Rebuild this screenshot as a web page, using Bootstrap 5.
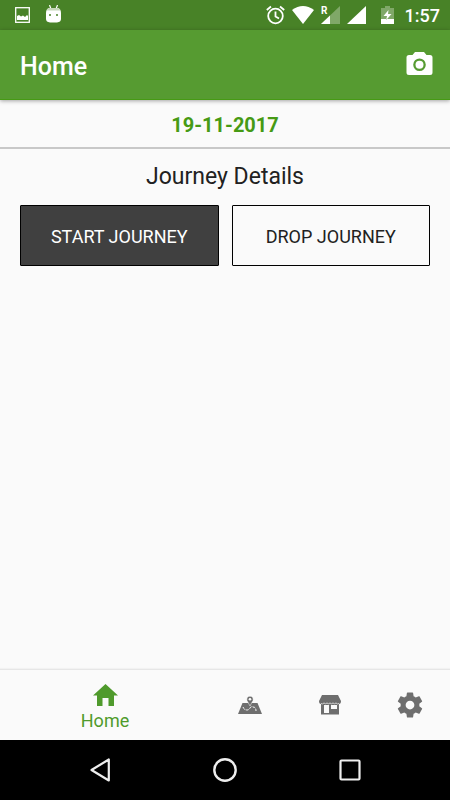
<!DOCTYPE html>
<html lang="en">
<head>
<meta charset="utf-8">
<meta name="viewport" content="width=device-width, initial-scale=1">
<title>Home</title>
<link href="https://cdn.jsdelivr.net/npm/bootstrap@5.3.0/dist/css/bootstrap.min.css" rel="stylesheet">
<style>
  body { font-family: Roboto, "Liberation Sans", sans-serif; background: #fafafa; color: #212121; }
  svg { display: block; flex: none; }
  .status-bar { height: 30px; background: #488227; color: #fff; padding: 0 10px 0 15px; }
  .status-right { gap: 7px; }
  .clock { font-size: 18px; line-height: 30px; font-weight: 500; padding-top: 1px; }
  .app-bar { height: 70px; background: #569b31; border-bottom: 1px solid #469a14; box-shadow: 0 1px 4px rgba(0,0,0,.35); padding: 0 17px 0 20px; }
  .app-title { font-size: 25px; line-height: 32px; font-weight: 500; color: #fff; padding-top: 4px; }
  .date-row { font-size: 20px; line-height: 26px; padding: 12px 0 9px; font-weight: 700; color: #469a14; border-bottom: 2px solid #c8c8c8; }
  .section-title { font-size: 23px; line-height: 28px; font-weight: 400; padding: 14px 0; }
  .actions { gap: 13px; padding: 0 20px; }
  .btn-journey { flex: 1 1 0; height: 61px; border: 1px solid #000; border-radius: 1px; font-size: 18px; line-height: 24px; color: #212121; padding: 2px 0 0; }
  .btn-journey.filled { background: #404040; color: #fff; }
  .tabs { height: 71px; border-top: 1px solid #e6e6e6; box-shadow: 0 -1px 1px rgba(0,0,0,.03); }
  .tab-item { flex: 8 1 0; color: #6e6e6e; text-decoration: none; }
  .tab-item.current { flex-grow: 21; color: #4f9a2c; padding-top: 6px; }
  .tab-label { font-size: 18px; line-height: 22px; }
  .system-nav { height: 60px; background: #000; padding: 0 38px; }
  .system-nav button { flex: 1 1 0; background: none; border: 0; padding: 0; }
</style>
</head>
<body class="d-flex flex-column min-vh-100">
<div class="status-bar d-flex align-items-center justify-content-between">
  <div class="d-flex align-items-center">
    <svg width="15" height="16" viewBox="0 0 15 16"><rect x=".7" y=".7" width="13.6" height="14.6" fill="none" stroke="#fff" stroke-width="1.3"/><path d="M2 13V9l2-1 2 1.500 2-1 2 1.500 2-2 1 1v4z" fill="#fff"/></svg>
    <svg class="ms-3" width="15" height="20" viewBox="0 0 15 20"><path d="M3.500 0L5 4M11.500 0L10 4" stroke="#fff" stroke-width="1.200"/><path d="M0 8q0-4 3-5h9q3 1 3 5v6q0 3-4 3.500H4Q0 17 0 14z" fill="#fff"/><path d="M3 3h9q2 .5 2.500 2.500h-14Q1 3.500 3 3z" fill="#c5d8b9"/><circle cx="4" cy="10" r="1" fill="#488227"/><circle cx="11" cy="10" r="1" fill="#488227"/></svg>
  </div>
  <div class="status-right d-flex align-items-center">
    <svg width="19" height="20" viewBox="0 0 19 20"><g fill="none" stroke="#fff" stroke-width="1.800"><circle cx="9.500" cy="11" r="7.300"/><path d="M.8 5L5 1.500M18.200 5L14 1.500M9.500 6.500v5l3.500 2"/></g></svg>
    <svg width="22" height="18" viewBox="0 0 22 18"><path d="M0 4Q11-4 22 4L11 18z" fill="#fff"/></svg>
    <svg width="19" height="20" viewBox="0 0 19 20"><path d="M19 1v18H0z" fill="#80a868"/><path d="M9 10.500V19H0z" fill="#fff"/><path d="M0 0h7v10H0z" fill="#488227"/><text x="0" y="9" font-size="10" font-weight="700" fill="#fff">R</text></svg>
    <svg width="19" height="20" viewBox="0 0 19 20"><path d="M19 1v18H0z" fill="#fff"/></svg>
    <svg class="ms-2" width="13" height="18" viewBox="0 0 13 18"><path d="M4 0h5v2h4v16H0V2h4z" fill="#80a868"/><path d="M0 13h13v5H0zM7.500 4L2.500 10H6l-.8 4L10.500 8H7z" fill="#fff"/></svg>
    <span class="clock ms-1">1:57</span>
  </div>
</div>
<header class="app-bar d-flex align-items-center justify-content-between">
  <h1 class="app-title mb-0">Home</h1>
  <button type="button" class="btn p-0 border-0" aria-label="Take photo">
    <svg width="27" height="26" viewBox="0 0 27 26"><path fill="#fff" fill-rule="evenodd" d="M9 0h9l2.500 3H24q2.500 0 2.500 2.500v15Q26.500 23 24 23H3Q.5 23 .5 20.500v-15Q.5 3 3 3h3.500zM13.500 6.500a6.300 6.300 0 1 0 0 12.600 6.300 6.300 0 0 0 0-12.600z"/><circle cx="13.500" cy="12.800" r="4" fill="#fff"/></svg>
  </button>
</header>
<main class="flex-grow-1 text-center">
  <div class="date-row">19-11-2017</div>
  <h2 class="section-title mb-0">Journey Details</h2>
  <div class="actions d-flex">
    <button type="button" class="btn btn-journey filled">START JOURNEY</button>
    <button type="button" class="btn btn-journey">DROP JOURNEY</button>
  </div>
</main>
<nav class="tabs d-flex">
  <a href="#" class="tab-item current d-flex flex-column align-items-center justify-content-center gap-1" aria-current="page">
    <svg width="25" height="22" viewBox="0 0 25 22"><path fill="currentColor" d="M12.500 0L25 11.500h-4V22h-5.500v-8h-6v8H4V11.500H0z"/></svg>
    <span class="tab-label">Home</span>
  </a>
  <a href="#" class="tab-item d-flex align-items-center justify-content-center" aria-label="Map">
    <svg width="24" height="18" viewBox="0 0 24 18"><path fill="currentColor" d="M4.500 7h15L24 18H0z"/><path d="M5 11q1 3 4 3 2 0 3-2t3-1q3 0 3 4" fill="none" stroke="#fafafa" stroke-width="1" stroke-dasharray="3 1"/><path d="M12 10L9 4.500A3.200 3.200 0 1 1 15 4.500z" fill="currentColor" stroke="#fafafa" stroke-width=".5"/><circle cx="12" cy="3.300" r="1.300" fill="#fafafa"/></svg>
  </a>
  <a href="#" class="tab-item d-flex align-items-center justify-content-center" aria-label="Store">
    <svg width="22" height="20" viewBox="0 0 22 20"><path fill="currentColor" d="M3 0h16l3 6q0 3-2 3v10.500H2V9Q0 9 0 6z"/><path fill="#fafafa" d="M5 10h5v8H5zM12 10h6v4h-6z"/><path d="M2 8.500q1.500 1 3-.5 1.500 1.500 3 0 1.500 1.500 3 0 1.500 1.500 3 0 1.500 1.500 3 0 1.500 1.500 3 .5" fill="none" stroke="#ddd" stroke-width=".9"/></svg>
  </a>
  <a href="#" class="tab-item d-flex align-items-center justify-content-center" aria-label="Settings">
    <svg width="30" height="30" viewBox="0 0 24 24"><path fill="currentColor" d="M19.430 12.980c.04-.32.07-.64.07-.98s-.03-.66-.07-.98l2.110-1.650c.19-.15.24-.42.12-.64l-2-3.460c-.12-.22-.39-.3-.61-.22l-2.490 1c-.52-.4-1.080-.73-1.690-.98l-.38-2.650A.488.488 0 0 0 14 2h-4c-.25 0-.46.18-.49.42l-.38 2.650c-.61.25-1.170.59-1.690.98l-2.490-1c-.23-.09-.49 0-.61.22l-2 3.460c-.13.22-.07.49.12.64l2.110 1.650c-.04.32-.07.65-.07.98s.03.66.07.98l-2.110 1.650c-.19.15-.24.42-.12.64l2 3.460c.12.22.39.3.61.22l2.490-1c.52.4 1.080.73 1.690.98l.38 2.650c.03.24.24.42.49.42h4c.25 0 .46-.18.49-.42l.38-2.650c.61-.25 1.170-.59 1.690-.98l2.490 1c.23.09.49 0 .61-.22l2-3.460c.12-.22.07-.49-.12-.64zM12 15.500a3.500 3.500 0 1 1 0-7 3.500 3.500 0 0 1 0 7z"/></svg>
  </a>
</nav>
<div class="system-nav d-flex">
  <button type="button" class="d-flex align-items-center justify-content-center" aria-label="Back"><svg width="20" height="24" viewBox="0 0 20 24"><path d="M18.800 1.500v21L1.500 12z" fill="none" stroke="#eee" stroke-width="2.200" stroke-linejoin="round"/></svg></button>
  <button type="button" class="d-flex align-items-center justify-content-center" aria-label="Home screen"><svg width="24" height="24" viewBox="0 0 24 24"><circle cx="12" cy="12" r="10.700" fill="none" stroke="#eee" stroke-width="2.400"/></svg></button>
  <button type="button" class="d-flex align-items-center justify-content-center" aria-label="Recent apps"><svg width="22" height="22" viewBox="0 0 22 22"><rect x="1.500" y="1.500" width="19" height="19" rx="1" fill="none" stroke="#eee" stroke-width="2.200"/></svg></button>
</div>
<script src="https://cdn.jsdelivr.net/npm/bootstrap@5.3.0/dist/js/bootstrap.bundle.min.js"></script>
</body>
</html>
